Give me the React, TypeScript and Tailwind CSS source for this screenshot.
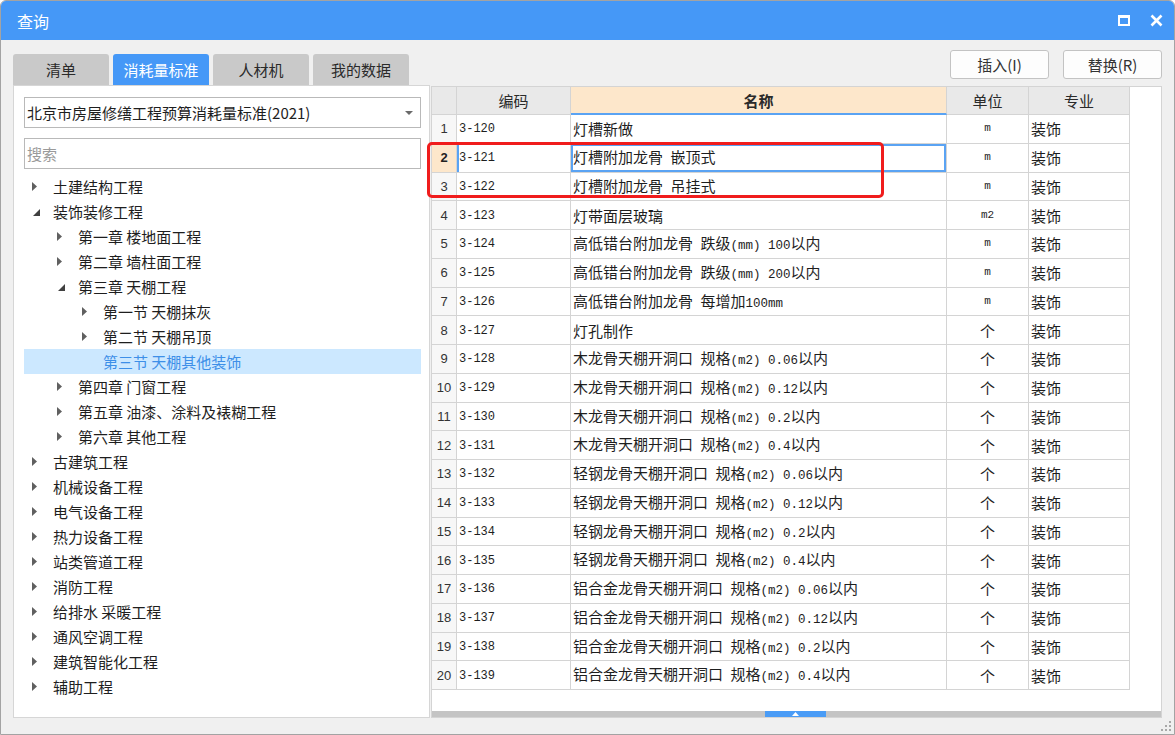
import React from "react";

type Row = [string, string, string];

const rows: Row[] = [
  ["3-120", "灯槽新做", "m"],
  ["3-121", "灯槽附加龙骨 嵌顶式", "m"],
  ["3-122", "灯槽附加龙骨 吊挂式", "m"],
  ["3-123", "灯带面层玻璃", "m2"],
  ["3-124", "高低错台附加龙骨 跌级(mm) 100以内", "m"],
  ["3-125", "高低错台附加龙骨 跌级(mm) 200以内", "m"],
  ["3-126", "高低错台附加龙骨 每增加100mm", "m"],
  ["3-127", "灯孔制作", "个"],
  ["3-128", "木龙骨天棚开洞口 规格(m2) 0.06以内", "个"],
  ["3-129", "木龙骨天棚开洞口 规格(m2) 0.12以内", "个"],
  ["3-130", "木龙骨天棚开洞口 规格(m2) 0.2以内", "个"],
  ["3-131", "木龙骨天棚开洞口 规格(m2) 0.4以内", "个"],
  ["3-132", "轻钢龙骨天棚开洞口 规格(m2) 0.06以内", "个"],
  ["3-133", "轻钢龙骨天棚开洞口 规格(m2) 0.12以内", "个"],
  ["3-134", "轻钢龙骨天棚开洞口 规格(m2) 0.2以内", "个"],
  ["3-135", "轻钢龙骨天棚开洞口 规格(m2) 0.4以内", "个"],
  ["3-136", "铝合金龙骨天棚开洞口 规格(m2) 0.06以内", "个"],
  ["3-137", "铝合金龙骨天棚开洞口 规格(m2) 0.12以内", "个"],
  ["3-138", "铝合金龙骨天棚开洞口 规格(m2) 0.2以内", "个"],
  ["3-139", "铝合金龙骨天棚开洞口 规格(m2) 0.4以内", "个"],
];

type Node = { level: 0 | 1 | 2; label: string; state: "closed" | "open" | "leaf"; selected?: boolean };

const tree: Node[] = [
  { level: 0, label: "土建结构工程", state: "closed" },
  { level: 0, label: "装饰装修工程", state: "open" },
  { level: 1, label: "第一章 楼地面工程", state: "closed" },
  { level: 1, label: "第二章 墙柱面工程", state: "closed" },
  { level: 1, label: "第三章 天棚工程", state: "open" },
  { level: 2, label: "第一节 天棚抹灰", state: "closed" },
  { level: 2, label: "第二节 天棚吊顶", state: "closed" },
  { level: 2, label: "第三节 天棚其他装饰", state: "leaf", selected: true },
  { level: 1, label: "第四章 门窗工程", state: "closed" },
  { level: 1, label: "第五章 油漆、涂料及裱糊工程", state: "closed" },
  { level: 1, label: "第六章 其他工程", state: "closed" },
  { level: 0, label: "古建筑工程", state: "closed" },
  { level: 0, label: "机械设备工程", state: "closed" },
  { level: 0, label: "电气设备工程", state: "closed" },
  { level: 0, label: "热力设备工程", state: "closed" },
  { level: 0, label: "站类管道工程", state: "closed" },
  { level: 0, label: "消防工程", state: "closed" },
  { level: 0, label: "给排水 采暖工程", state: "closed" },
  { level: 0, label: "通风空调工程", state: "closed" },
  { level: 0, label: "建筑智能化工程", state: "closed" },
  { level: 0, label: "辅助工程", state: "closed" },
];

const indent = ["pl-[8px]", "pl-[33px]", "pl-[58px]"];

// ascii runs render narrower, like the half-width glyphs in the original grid
function Mixed({ text }: { text: string }) {
  const parts = text.split(/([\x20-\x7e]+)/).filter((p) => p !== "");
  return (
    <span className="whitespace-pre">
      {parts.map((p, i) =>
        /^[\x20-\x7e]+$/.test(p) ? (
          <span key={i} className="font-['Liberation_Mono',monospace] text-[12.5px]">
            {p}
          </span>
        ) : (
          <span key={i}>{p}</span>
        )
      )}
    </span>
  );
}

const Arrow = ({ state }: { state: Node["state"] }) => {
  if (state === "closed")
    return (
      <svg width="6" height="9" viewBox="0 0 6 9">
        <polygon points="0,0 5,4.5 0,9" fill="#606060" />
      </svg>
    );
  if (state === "open")
    return (
      <svg width="8" height="8" viewBox="0 0 8 8" className="ml-[1px] mt-[2px]">
        <polygon points="7,0 7,7 0,7" fill="#404040" />
      </svg>
    );
  return null;
};

const App: React.FC = () => {
  return (
    <div className="flex h-[735px] w-[1175px] flex-col overflow-hidden rounded-t-[6px] border border-[#a3a3a3] bg-[#f0f0f0] font-['Noto_Sans_CJK_SC',sans-serif] text-[#1e1e1e]">
      {/* title bar */}
      <div className="flex h-[39px] shrink-0 items-center bg-[#4598f7] pl-[16px] pr-[11px]">
        <span className="text-[16px] leading-none text-white">查询</span>
        <div className="ml-auto flex items-center gap-[20px]">
          <svg width="12" height="11" viewBox="0 0 12 11">
            <rect x="1" y="1.5" width="10" height="8.5" fill="none" stroke="white" strokeWidth="2" />
            <rect x="0" y="0" width="12" height="3" fill="white" />
          </svg>
          <svg width="13" height="13" viewBox="0 0 13 13">
            <path d="M1.5 1.5 L11.5 11.5 M11.5 1.5 L1.5 11.5" stroke="white" strokeWidth="2.6" />
          </svg>
        </div>
      </div>

      {/* body */}
      <div className="relative flex flex-1 pl-[12px]">
        {/* left column */}
        <div className="flex w-[417px] flex-col pt-[14px]">
          <div className="flex h-[31px] gap-[4px] text-[15px] leading-none">
            <div className="flex w-[96px] items-center justify-center rounded-t-[3px] bg-[#c9c9c9] text-[#2a2a2a]">清单</div>
            <div className="flex w-[96px] items-center justify-center rounded-t-[3px] bg-[#4598f7] text-white">消耗量标准</div>
            <div className="flex w-[96px] items-center justify-center rounded-t-[3px] bg-[#c9c9c9] text-[#2a2a2a]">人材机</div>
            <div className="flex w-[96px] items-center justify-center rounded-t-[3px] bg-[#c9c9c9] text-[#2a2a2a]">我的数据</div>
          </div>
          <div className="flex h-[633px] flex-col border border-[#d6d6d6] bg-white pl-[10px] pr-[8px] pt-[11px]">
            <div className="flex h-[31px] items-center border border-[#b9b9b9] pl-[2px] pr-[7px] text-[15px] leading-none">
              <span>北京市房屋修缮工程预算消耗量标准(2021)</span>
              <svg width="8" height="4" viewBox="0 0 8 4" className="ml-auto">
                <polygon points="0,0 8,0 4,4" fill="#6a6a6a" />
              </svg>
            </div>
            <div className="mt-[10px] flex h-[31px] items-center border border-[#b9b9b9] pl-[2px] text-[15px] leading-none text-[#9a9a9a]">
              搜索
            </div>
            <div className="mt-[5px] flex flex-col">
              {tree.map((n, i) => (
                <div
                  key={i}
                  className={`flex h-[25px] items-center text-[15px] leading-none ${indent[n.level]} ${
                    n.selected ? "bg-[#cce8ff] text-[#3d8fe8]" : ""
                  }`}
                >
                  <div className="flex w-[21px] items-center">
                    <Arrow state={n.state} />
                  </div>
                  <span className="whitespace-pre">{n.label}</span>
                </div>
              ))}
            </div>
          </div>
        </div>

        {/* right column */}
        <div className="ml-[1px] flex w-[731px] flex-col pt-[10px]">
          <div className="flex h-[29px] justify-end gap-[14px] text-[15px] leading-none text-[#333]">
            <div className="flex w-[99px] items-center justify-center rounded-[3px] border border-[#c3c3c3] bg-[#fdfdfd]">插入(I)</div>
            <div className="flex w-[99px] items-center justify-center rounded-[3px] border border-[#c3c3c3] bg-[#fdfdfd]">替换(R)</div>
          </div>

          <div className="relative mt-[7px] flex h-[632px] flex-col border border-[#d4d4d4] bg-white">
            {/* header */}
            <div className="flex h-[28px] text-[15px] leading-none text-[#2a2a2a]">
              <div className="w-[25px] border-b border-r border-[#d4d4d4] bg-[#e9e9e9]" />
              <div className="flex w-[114px] items-center justify-center border-b border-r border-[#d4d4d4] bg-[#e9e9e9]">编码</div>
              <div className="flex w-[376px] items-center justify-center border-b-2 border-r border-b-[#5aa3f3] border-r-[#d4d4d4] bg-[#fde7cb] font-bold">
                名称
              </div>
              <div className="flex w-[82px] items-center justify-center border-b border-r border-[#d4d4d4] bg-[#e9e9e9]">单位</div>
              <div className="flex w-[101px] items-center justify-center border-b border-r border-[#d4d4d4] bg-[#e9e9e9]">专业</div>
            </div>

            {/* rows */}
            {rows.map(([code, name, unit], i) => {
              const sel = i === 1;
              return (
                <div key={code} className="flex h-[28.75px] text-[15px] leading-none">
                  <div
                    className={`flex w-[25px] items-center justify-center border-b border-r border-[#d4d4d4] font-['Liberation_Sans',sans-serif] text-[13px] ${
                      sel ? "bg-[#fde7cb] font-bold text-[#222]" : "bg-[#f7f7f7] text-[#333]"
                    }`}
                  >
                    {i + 1}
                  </div>
                  <div
                    className={`flex w-[114px] items-center border-b border-r border-[#d4d4d4] pl-[2px] pt-[1px] font-['Liberation_Mono',monospace] text-[12px] ${
                      sel ? "shadow-[inset_2px_0_0_#5aa3f3]" : ""
                    }`}
                  >
                    {code}
                  </div>
                  <div
                    className={`flex w-[376px] items-center border-b border-r border-[#d4d4d4] pl-[2px] ${
                      sel ? "shadow-[inset_0_0_0_2px_#5aa3f3]" : ""
                    }`}
                  >
                    <Mixed text={name} />
                  </div>
                  <div className="flex w-[82px] items-center justify-center border-b border-r border-[#d4d4d4]">
                    {unit === "个" ? unit : <span className="font-['Liberation_Mono',monospace] text-[11px]">{unit}</span>}
                  </div>
                  <div className="flex w-[101px] items-center border-b border-r border-[#d4d4d4] pl-[2px]">装饰</div>
                </div>
              );
            })}

            <div className="flex-1" />

            {/* horizontal scrollbar */}
            <div className="flex h-[6px] bg-[#c4c4c4]">
              <div className="ml-[333px] flex w-[61px] items-center justify-center bg-[#4a9cf6]">
                <svg width="7" height="4" viewBox="0 0 7 4">
                  <polygon points="0,4 7,4 3.5,0" fill="white" />
                </svg>
              </div>
            </div>

            {/* red highlight */}
            <div className="absolute left-[-5px] top-[55px] h-[56px] w-[457px] rounded-[5px] border-[3px] border-[#f01c1c]" />
          </div>
        </div>

        {/* resize grip */}
        <svg width="10" height="10" viewBox="0 0 10 10" className="absolute bottom-[3px] right-[3px]">
          <rect x="8" y="0" width="2" height="2" fill="#a8a8a8" />
          <rect x="4" y="4" width="2" height="2" fill="#a8a8a8" />
          <rect x="8" y="4" width="2" height="2" fill="#a8a8a8" />
          <rect x="0" y="8" width="2" height="2" fill="#a8a8a8" />
          <rect x="4" y="8" width="2" height="2" fill="#a8a8a8" />
          <rect x="8" y="8" width="2" height="2" fill="#a8a8a8" />
        </svg>
      </div>
    </div>
  );
};

export default App;
